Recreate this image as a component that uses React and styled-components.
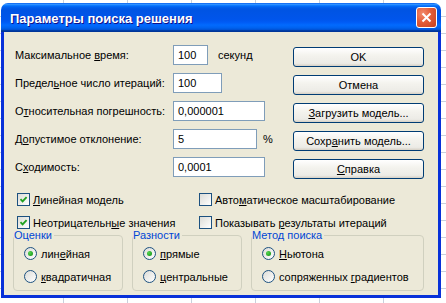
import React from "react";
import styled, { createGlobalStyle } from "styled-components";

const Global = createGlobalStyle`
  html, body {
    margin: 0;
    padding: 0;
  }
  body {
    width: 446px;
    height: 303px;
    overflow: hidden;
    background-color: #fff;
    background-image:
      repeating-linear-gradient(to bottom, transparent 0, transparent 16px, #c8d0dc 16px, #c8d0dc 17px),
      repeating-linear-gradient(to right, transparent 0, transparent 63px, #c8d0dc 63px, #c8d0dc 64px);
    font-family: "Liberation Sans", Arial, sans-serif;
  }
`;

const Window = styled.div`
  margin: 3px 0 0 1px;
  width: 440px;
  display: flex;
  flex-direction: column;
`;

const TitleBar = styled.div`
  height: 29px;
  border-radius: 7px 7px 0 0;
  display: flex;
  align-items: center;
  justify-content: space-between;
  padding: 2px 4px 0 9px;
  box-sizing: border-box;
  background: linear-gradient(
    180deg,
    #0058ee 0%,
    #3593ff 4%,
    #288eff 6%,
    #127dff 8%,
    #036ffc 10%,
    #0262ee 14%,
    #0057e5 20%,
    #0054e3 24%,
    #0055eb 56%,
    #005bf5 66%,
    #026afe 76%,
    #0062ef 86%,
    #0052d6 92%,
    #0040ab 94%,
    #003092 100%
  );
`;

const Title = styled.span`
  color: #fff;
  font-family: "Liberation Sans", Arial, sans-serif;
  font-weight: bold;
  font-size: 13px;
  text-shadow: 1px 1px #0f1089;
`;

const CloseButton = styled.div`
  width: 21px;
  height: 21px;
  box-sizing: border-box;
  border: 1px solid #fff;
  border-radius: 3px;
  background: radial-gradient(circle at 30% 30%, #f28c6e 0%, #e45c37 45%, #c4401f 100%);
  display: flex;
  align-items: center;
  justify-content: center;
  margin-top: -2px;
`;

const Body = styled.div`
  background: #ece9d8;
  border: 3px solid #0831d9;
  border-top: none;
  padding: 13px 14px 8px 9px;
  display: flex;
  flex-direction: column;
  height: 266px;
  box-sizing: border-box;
  font-size: 11px;
  color: #000;
`;

const Top = styled.div`
  display: flex;
  justify-content: space-between;
`;

const Fields = styled.div`
  display: flex;
  flex-direction: column;
  gap: 8px;
  padding-left: 2px;
`;

const FieldRow = styled.div`
  display: flex;
  align-items: center;
  height: 20px;
`;

const Label = styled.span`
  width: 158px;
`;

const Input = styled.div`
  width: ${(p) => p.$w}px;
  height: 20px;
  box-sizing: border-box;
  background: #fff;
  border: 1px solid #7f9db9;
  padding-left: 4px;
  display: flex;
  align-items: center;
`;

const Unit = styled.span`
  margin-left: ${(p) => p.$gap}px;
`;

const Buttons = styled.div`
  display: flex;
  flex-direction: column;
  gap: 8px;
  margin-top: 2px;
`;

const Button = styled.div`
  width: 131px;
  height: 20px;
  box-sizing: border-box;
  border: 1px solid #003c74;
  border-radius: 3px;
  background: linear-gradient(180deg, #ffffff 0%, #f4f3ee 40%, #ecebe6 85%, #d6d0c5 100%);
  display: flex;
  align-items: center;
  justify-content: center;
`;

const Key = styled.u`
  text-decoration: underline;
  text-underline-offset: 1px;
`;

const Checks = styled.div`
  display: grid;
  grid-template-columns: 182px 1fr;
  row-gap: 6px;
  margin: 12px 0 0 4px;
`;

const CheckRow = styled.div`
  display: flex;
  align-items: center;
  gap: 3px;
  height: 17px;
`;

const Box = styled.span`
  width: 13px;
  height: 13px;
  box-sizing: border-box;
  border: 1px solid #1c5180;
  background: linear-gradient(135deg, #dcdcd7 0%, #ffffff 100%);
  display: flex;
  align-items: center;
  justify-content: center;
`;

const Groups = styled.div`
  display: flex;
  gap: 9px;
  margin-top: -2px;
`;

const Group = styled.fieldset`
  width: ${(p) => p.$w}px;
  box-sizing: border-box;
  margin: 0;
  padding: 3px 0 0 0;
  height: 62px;
  border: 1px solid #d0d0bf;
  border-radius: 4px;
  display: flex;
  flex-direction: column;
  gap: 6px;
`;

const Legend = styled.legend`
  color: #0046d5;
  padding: 0 2px 0 0;
  margin-left: 0;
  font-size: 11px;
  line-height: 13px;
`;

const RadioRow = styled.div`
  display: flex;
  align-items: center;
  gap: 4px;
  height: 17px;
  margin-left: 10px;
`;

const Radio = styled.span`
  width: 13px;
  height: 13px;
  box-sizing: border-box;
  border-radius: 50%;
  border: 1px solid #1c5180;
  background: linear-gradient(135deg, #dcdcd7 0%, #ffffff 100%);
  display: flex;
  align-items: center;
  justify-content: center;
`;

const Dot = styled.span`
  width: 5px;
  height: 5px;
  border-radius: 50%;
  background: radial-gradient(circle at 35% 35%, #55d551 0%, #21a121 70%, #1a8a1a 100%);
`;

const CheckMark = () => (
  <svg width="9" height="9" viewBox="0 0 9 9">
    <path d="M1.5 4.2 L3.6 6.3 L7.6 2.2" fill="none" stroke="#21a121" strokeWidth="1.9" />
  </svg>
);

const Check = ({ on, children }) => (
  <CheckRow>
    <Box>{on && <CheckMark />}</Box>
    <span>{children}</span>
  </CheckRow>
);

const Option = ({ on, children }) => (
  <RadioRow>
    <Radio>{on && <Dot />}</Radio>
    <span>{children}</span>
  </RadioRow>
);

export default function App() {
  return (
    <>
      <Global />
      <Window>
        <TitleBar>
          <Title>Параметры поиска решения</Title>
          <CloseButton>
            <svg width="11" height="11" viewBox="0 0 11 11">
              <path d="M1.5 1.5 L9.5 9.5 M9.5 1.5 L1.5 9.5" stroke="#fff" strokeWidth="2" />
            </svg>
          </CloseButton>
        </TitleBar>
        <Body>
          <Top>
            <Fields>
              <FieldRow>
                <Label>
                  Максимальное <Key>в</Key>ремя:
                </Label>
                <Input $w={35}>100</Input>
                <Unit $gap={10}>секунд</Unit>
              </FieldRow>
              <FieldRow>
                <Label>
                  Предел<Key>ь</Key>ное число итераций:
                </Label>
                <Input $w={49}>100</Input>
              </FieldRow>
              <FieldRow>
                <Label>
                  О<Key>т</Key>носительная погрешность:
                </Label>
                <Input $w={92}>0,000001</Input>
              </FieldRow>
              <FieldRow>
                <Label>
                  Д<Key>о</Key>пустимое отклонение:
                </Label>
                <Input $w={84}>5</Input>
                <Unit $gap={6}>%</Unit>
              </FieldRow>
              <FieldRow>
                <Label>
                  С<Key>х</Key>одимость:
                </Label>
                <Input $w={92}>0,0001</Input>
              </FieldRow>
            </Fields>
            <Buttons>
              <Button>OK</Button>
              <Button>Отмена</Button>
              <Button>
                <span>
                  <Key>З</Key>агрузить модель...
                </span>
              </Button>
              <Button>
                <span>
                  Сохр<Key>а</Key>нить модель...
                </span>
              </Button>
              <Button>
                <span>
                  <Key>С</Key>правка
                </span>
              </Button>
            </Buttons>
          </Top>
          <Checks>
            <Check on>
              <Key>Л</Key>инейная модель
            </Check>
            <Check>
              Авто<Key>м</Key>атическое масштабирование
            </Check>
            <Check on>
              Неотрицательн<Key>ы</Key>е значения
            </Check>
            <Check>
              Показывать <Key>р</Key>езультаты итераций
            </Check>
          </Checks>
          <Groups>
            <Group $w={110}>
              <Legend>Оценки</Legend>
              <Option on>
                лин<Key>е</Key>йная
              </Option>
              <Option>
                <Key>к</Key>вадратичная
              </Option>
            </Group>
            <Group $w={110}>
              <Legend>Разности</Legend>
              <Option on>
                <Key>п</Key>рямые
              </Option>
              <Option>
                <Key>ц</Key>ентральные
              </Option>
            </Group>
            <Group $w={173}>
              <Legend>Метод поиска</Legend>
              <Option on>
                <Key>Н</Key>ьютона
              </Option>
              <Option>
                сопряженных <Key>г</Key>радиентов
              </Option>
            </Group>
          </Groups>
        </Body>
      </Window>
    </>
  );
}
